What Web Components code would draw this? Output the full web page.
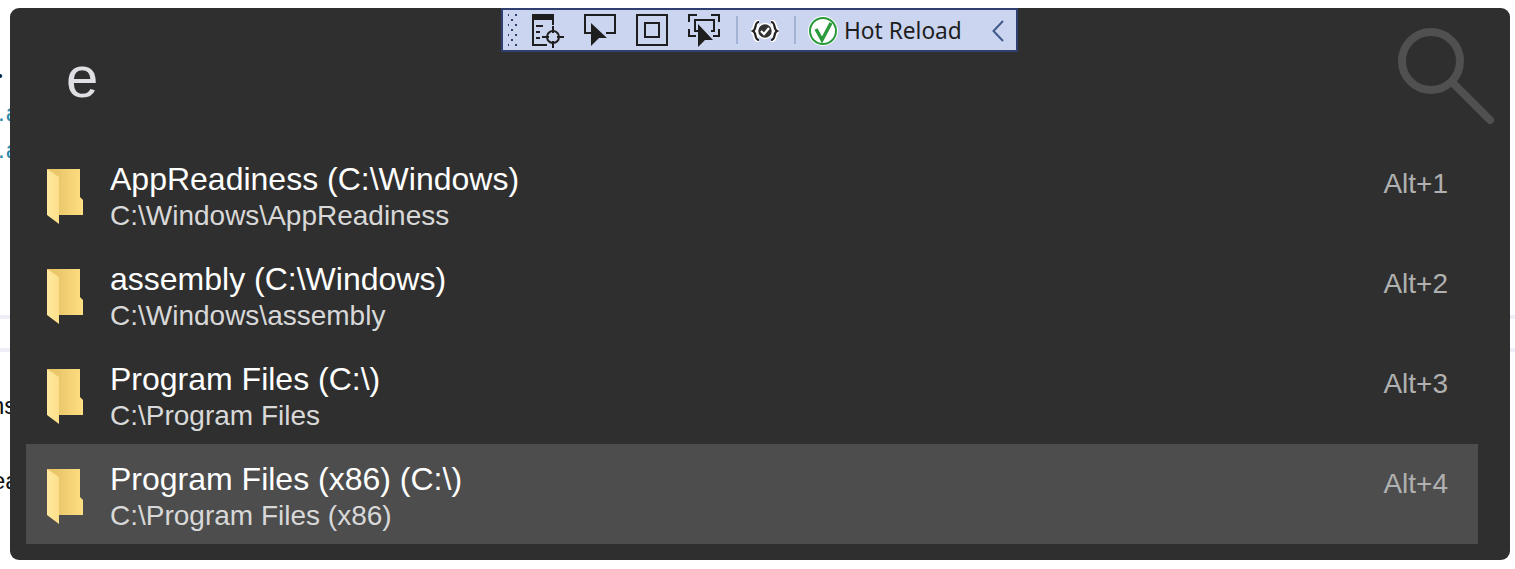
<!DOCTYPE html>
<html>
<head>
<meta charset="utf-8">
<title>Launcher</title>
<style>
  html, body { margin: 0; height: 100%; background: #fff; overflow: hidden; }
  body { font-family: "Liberation Sans", Arial, sans-serif; }
</style>
</head>
<body>
<launcher-backdrop></launcher-backdrop>
<launcher-panel>
  <debug-toolbar slot="overlay"></debug-toolbar>
  <launcher-search query="e"></launcher-search>
  <launcher-row name="AppReadiness (C:\Windows)" path="C:\Windows\AppReadiness" shortcut="Alt+1"></launcher-row>
  <launcher-row name="assembly (C:\Windows)" path="C:\Windows\assembly" shortcut="Alt+2"></launcher-row>
  <launcher-row name="Program Files (C:\)" path="C:\Program Files" shortcut="Alt+3"></launcher-row>
  <launcher-row name="Program Files (x86) (C:\)" path="C:\Program Files (x86)" shortcut="Alt+4" selected></launcher-row>
</launcher-panel>

<script>
// what is left of the window behind the launcher
class LauncherBackdrop extends HTMLElement {
  constructor() {
    super();
    this.attachShadow({mode: 'open'}).innerHTML = `
      <style>
      :host { position: absolute; inset: 0; display: block; overflow: hidden; font: 24px "Liberation Sans", Arial, sans-serif; color: #111; }
      .line { position: absolute; left: 0; right: 0; height: 4px; background: #eeeef6; }
      .bit { position: absolute; white-space: nowrap; line-height: 28px; }
      .link { color: #2b8aaa; letter-spacing: 1px; }
      </style>
      <div class="line" style="top:315px"></div>
      <div class="line" style="top:348px"></div>
      <div class="bit" style="left:-11px;top:62px">&gt;</div>
      <div class="bit link" style="left:-2px;top:99px">.a</div>
      <div class="bit link" style="left:-2px;top:136px">.a</div>
      <div class="bit" style="left:-9px;top:392px">ns</div>
      <div class="bit" style="left:-8px;top:467px">ea</div>
    `;
  }
}

class LauncherPanel extends HTMLElement {
  constructor() {
    super();
    this.attachShadow({mode: 'open'}).innerHTML = `
      <style>
      :host {
        position: relative;
        display: flex;
        flex-direction: column;
        box-sizing: border-box;
        width: 1500px;
        height: 552px;
        margin: 8px 0 0 10px;
        padding: 0 32px 16px 16px;
        background: #2f2f2f;
        border-radius: 9px;
      }
      .overlay { position: absolute; left: 491px; top: 0; }
      </style>
      <div class="overlay"><slot name="overlay"></slot></div>
      <slot></slot>
    `;
  }
}

class LauncherSearch extends HTMLElement {
  constructor() {
    super();
    this.attachShadow({mode: 'open'}).innerHTML = `
      <style>
      :host {
        display: flex;
        align-items: flex-start;
        justify-content: space-between;
        height: 136px;
        margin-right: -32px;
      }
      .query { font-size: 58px; line-height: 66px; color: #e0e0e4; padding: 36px 0 0 40px; }
      svg { margin: 19px 14px 0 0; display: block; }
      </style>
      <div class="query"></div>
      <svg width="98" height="98" viewBox="0 0 98 98" fill="none" stroke="#505050" stroke-width="8" stroke-linecap="round">
        <circle cx="33" cy="34" r="29"/>
        <path d="M54 55 L92 93"/>
      </svg>
    `;
    this.shadowRoot.querySelector('.query').textContent = this.getAttribute('query');
  }
}

class FolderIcon extends HTMLElement {
  constructor() {
    super();
    this.attachShadow({mode: 'open'}).innerHTML = `
      <style>
      :host { display: block; width: 37px; height: 56px; }
      svg { display: block; }
      </style>
      <svg width="37" height="56" viewBox="0 0 37 56">
        <defs>
          <linearGradient id="back" x1="0" x2="1" y1="0" y2="0">
            <stop offset="0.3" stop-color="#eac66a"/>
            <stop offset="1" stop-color="#ffdf82"/>
          </linearGradient>
          <linearGradient id="flap" x1="0" x2="1" y1="0" y2="0">
            <stop offset="0" stop-color="#ffe99f"/>
            <stop offset="1" stop-color="#fddf8a"/>
          </linearGradient>
        </defs>
        <path d="M0 0 H33 V28 L36 31 V46 H11 V12 Z" fill="url(#back)"/>
        <path d="M0 0 L12 8 V55 L0 46 Z" fill="url(#flap)"/>
      </svg>
    `;
  }
}

class LauncherRow extends HTMLElement {
  constructor() {
    super();
    this.attachShadow({mode: 'open'}).innerHTML = `
      <style>
      :host {
        display: grid;
        grid-template-columns: 84px 1fr auto;
        align-items: start;
        height: 100px;
      }
      :host([selected]) { background: #4d4d4d; }
      folder-icon { margin: 25px 0 0 21px; }
      .name { font-size: 32px; line-height: 38px; color: #fff; padding-top: 16px; white-space: nowrap; }
      .path { font-size: 28px; line-height: 32px; color: #d8d8d8; margin-top: 2px; white-space: nowrap; }
      .shortcut { font-size: 28px; line-height: 32px; color: #b0b0b0; padding: 24px 30px 0 0; }
      </style>
      <folder-icon></folder-icon>
      <div>
        <div class="name"></div>
        <div class="path"></div>
      </div>
      <div class="shortcut"></div>
    `;
    let root = this.shadowRoot;
    root.querySelector('.name').textContent = this.getAttribute('name');
    root.querySelector('.path').textContent = this.getAttribute('path');
    root.querySelector('.shortcut').textContent = this.getAttribute('shortcut');
  }
}

class DebugToolbar extends HTMLElement {
  constructor() {
    super();
    this.attachShadow({mode: 'open'}).innerHTML = `
      <style>
      :host {
        display: flex;
        align-items: center;
        box-sizing: border-box;
        width: 517px;
        height: 44px;
        padding-top: 2px;
        background: #ccd5f0;
        border: 2px solid #2f3f70;
        font: 22.7px "Noto Sans", "Open Sans", sans-serif;
        color: #1e1e1e;
      }
      svg { display: block; flex: none; }
      .grip { margin-left: 4px; }
      .i1 { margin-left: 12px; }
      .i2, .i3, .i4 { margin-left: 20px; }
      .sep { width: 2px; height: 28px; margin-top: -2px; background: #a3b3d6; flex: none; }
      .s1 { margin-left: 16px; }
      .b { margin-left: 13px; margin-top: -1px; }
      .s2 { margin-left: 15px; }
      .ok { margin-left: 12px; }
      .label { margin-left: 6px; margin-top: -1px; line-height: 32px; white-space: nowrap; }
      .chev { margin-left: auto; margin-right: 12px; margin-top: -1px; }
      </style>
      <svg class="grip" width="12" height="34" viewBox="0 0 12 34" fill="#2f3f70">
        <defs><pattern id="g" width="8" height="10" patternUnits="userSpaceOnUse">
          <rect x="0" y="0" width="2" height="2"/><rect x="4" y="5" width="2" height="2"/>
        </pattern></defs>
        <rect x="1" width="11" height="34" fill="url(#g)"/>
      </svg>
      <svg class="i1" width="33" height="34" viewBox="0 0 33 34" fill="none" stroke="#1e1e1e" stroke-width="2">
        <rect x="1" width="22" height="6" fill="#1e1e1e" stroke="none"/>
        <path d="M2 5 V31 H16 M22 5 V11 M5 12 H12 M5 18 H9 M5 24 H9"/>
        <circle cx="22" cy="23" r="6"/>
        <path d="M22 12 V19 M22 27 V34 M11 23 H18 M26 23 H33"/>
      </svg>
      <svg class="i2" width="32" height="34" viewBox="0 0 32 34" fill="none" stroke="#1e1e1e" stroke-width="2">
        <path d="M7 19 H1 V1 H31 V19 H22"/>
        <path d="M7 9 L23 24 H15 L7 32 Z" fill="#1e1e1e" stroke="none"/>
      </svg>
      <svg class="i3" width="32" height="34" viewBox="0 0 32 34" fill="none" stroke="#1e1e1e" stroke-width="2">
        <rect x="1" y="1" width="30" height="30"/>
        <rect x="9" y="9" width="14" height="14"/>
      </svg>
      <svg class="i4" width="32" height="34" viewBox="0 0 32 34" fill="none" stroke="#1e1e1e" stroke-width="2">
        <path d="M9 1 H1 V8 M23 1 H31 V8 M1 15 V22 H8 M31 15 V22 H25"/>
        <path d="M11 17 H7 V6 H26 V17 H23"/>
        <path d="M10 10 L25 26 H17 L10 33 Z" fill="#1e1e1e" stroke="none"/>
      </svg>
      <div class="sep s1"></div>
      <svg class="b" width="28" height="22" viewBox="0 0 28 22" fill="none">
        <path d="M8 2 C3 2 6 9 2 11 C6 13 3 20 8 20 M20 2 C25 2 22 9 26 11 C22 13 25 20 20 20" stroke="#fff" stroke-width="5.5"/>
        <path d="M8 2 C3 2 6 9 2 11 C6 13 3 20 8 20 M20 2 C25 2 22 9 26 11 C22 13 25 20 20 20" stroke="#222" stroke-width="2.2"/>
        <circle cx="14" cy="11" r="7.5" fill="#333" stroke="#fff" stroke-width="1.5"/>
        <path d="M10 11 L13 14 L18 8" stroke="#fff" stroke-width="2.2"/>
      </svg>
      <div class="sep s2"></div>
      <svg class="ok" width="30" height="30" viewBox="0 0 30 30" fill="none">
        <circle cx="15" cy="15" r="15" fill="#fff"/>
        <circle cx="15" cy="15" r="13" stroke="#2a9a3c" stroke-width="2"/>
        <path d="M8 13 L14 24 L23 7" stroke="#2a9a3c" stroke-width="3.4"/>
      </svg>
      <span class="label">Hot Reload</span>
      <svg class="chev" width="12" height="22" viewBox="0 0 12 22" fill="none" stroke="#3f5a8a" stroke-width="2">
        <path d="M11 1 L1.5 11 L11 21"/>
      </svg>
    `;
  }
}

customElements.define('launcher-backdrop', LauncherBackdrop);
customElements.define('folder-icon', FolderIcon);
customElements.define('launcher-row', LauncherRow);
customElements.define('launcher-search', LauncherSearch);
customElements.define('debug-toolbar', DebugToolbar);
customElements.define('launcher-panel', LauncherPanel);
</script>
</body>
</html>
